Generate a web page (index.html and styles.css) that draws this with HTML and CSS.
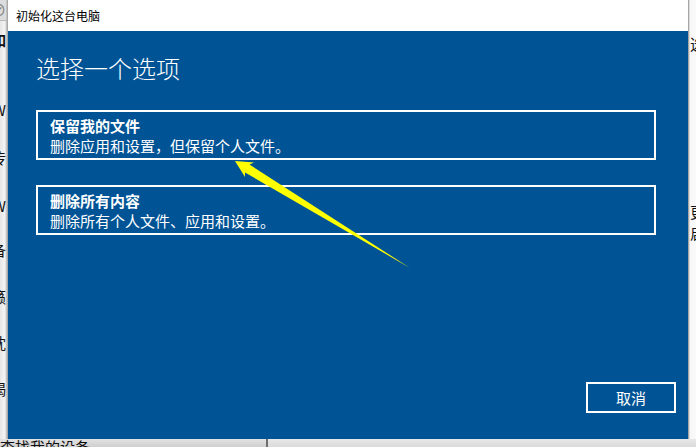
FILE: index.html
```html
<!DOCTYPE html>
<html lang="zh-CN">
<head>
    <meta charset="UTF-8">
    <meta name="viewport" content="width=device-width, initial-scale=1.0">
    <title>初始化这台电脑</title>
    <link rel="stylesheet" href="styles.css">
</head>
<body>
    <div class="screen">
        <div class="side side-left">
            <div class="side-text">
                <div class="top-bar"><span class="tb-icon">⊘</span></div>
                <div class="frag bold" style="margin-top: 10px">如</div>
                <div class="frag" style="margin-top: 52px">W</div>
                <div class="frag" style="margin-top: 30px">传</div>
                <div class="frag" style="margin-top: 30px">W</div>
                <div class="frag" style="margin-top: 26px">备</div>
                <div class="frag" style="margin-top: 29px">籁</div>
                <div class="frag" style="margin-top: 28px">枕</div>
                <div class="frag" style="margin-top: 28px">揭</div>
            </div>
        </div>

        <div class="dialog">
            <div class="title-bar">初始化这台电脑</div>
            <div class="dialog-body">
                <h1 class="heading">选择一个选项</h1>
                <div class="option">
                    <div class="option-title">保留我的文件</div>
                    <div class="option-desc">删除应用和设置，但保留个人文件。</div>
                </div>
                <div class="option">
                    <div class="option-title">删除所有内容</div>
                    <div class="option-desc">删除所有个人文件、应用和设置。</div>
                </div>
                <div class="footer">
                    <button class="btn-cancel">取消</button>
                </div>
            </div>
        </div>

        <div class="side side-right">
            <div class="side-text">
                <div class="frag" style="margin-top: 35px">选</div>
                <div class="frag" style="margin-top: 150px">更</div>
                <div class="frag" style="margin-top: 3px">启</div>
            </div>
        </div>

        <div class="bottom-strip">
            <div class="bottom-left">查找我的设备</div>
            <div class="bottom-right"></div>
        </div>

        <!-- annotation arrow drawn over the screenshot -->
        <svg class="arrow" width="696" height="447" viewBox="0 0 696 447">
            <polygon points="235,161 245,177 245,172.5 410,268 249.5,164.5 254,162.5" fill="#ffff00"/>
        </svg>
    </div>
</body>
</html>
```

FILE: styles.css
```css
body {
    margin: 0;
    font-family: "Noto Sans CJK SC", "Microsoft YaHei", sans-serif;
    background-color: #f3f3f3;
}

.screen {
    position: relative;
    width: 696px;
    height: 447px;
    overflow: hidden;
    display: grid;
    grid-template-columns: 8px 680px 8px;
    grid-template-rows: 439px 8px;
}

.side {
    overflow: hidden;
    background-color: #f5f5f5;
}

.side-left {
    background: linear-gradient(to right, #e6e6e6, #f4f4f4 60%, #9a9a9a);
}

.side-left .side-text {
    width: 22px;
    margin-left: -16px;
    text-align: right;
}

.side-right {
    background: linear-gradient(to right, #8a8a8a, #f7f7f7 25%, #fafafa);
}

.side-right .side-text {
    width: 22px;
    margin-left: 2px;
    text-align: left;
}

.top-bar {
    height: 20px;
    border-bottom: 1px solid #b8b8b8;
    background-color: #dcdcdc;
    font-size: 14px;
    line-height: 18px;
    color: #777;
}

.frag {
    font-size: 15px;
    line-height: 18px;
    color: #111;
}

.frag.bold {
    font-weight: 700;
}

.dialog {
    display: flex;
    flex-direction: column;
    background-color: #005496;
    box-shadow: 1px 1px 0 #7b7b7b, 2px 2px 2px rgba(0, 0, 0, 0.2);
}

.title-bar {
    height: 31px;
    padding-left: 8px;
    background-color: #fff;
    color: #000;
    font-size: 12px;
    line-height: 31px;
}

.dialog-body {
    flex: 1;
    display: flex;
    flex-direction: column;
    gap: 25px;
    padding: 21px 32px 0 28px;
    color: #fff;
}

.heading {
    margin: 0 0 1px;
    font-size: 24px;
    font-weight: 300;
    line-height: 32px;
}

.option {
    height: 40px;
    padding: 4px 12px 2px;
    border: 2px solid #fff;
    font-size: 15px;
    line-height: 20px;
}

.option-title {
    font-weight: 700;
}

.footer {
    flex: 1;
    display: flex;
    justify-content: flex-end;
    align-items: flex-end;
    margin-right: -20px;
    padding-bottom: 26px;
}

.btn-cancel {
    width: 90px;
    height: 31px;
    border: 2px solid #fff;
    background: transparent;
    color: #fff;
    font-family: "Noto Sans CJK SC", sans-serif;
    font-size: 15px;
    line-height: 25px;
    padding: 0;
}

.bottom-strip {
    grid-column: 1 / 4;
    display: flex;
}

.bottom-left {
    width: 266px;
    border-right: 2px solid #6e6e6e;
    background: linear-gradient(to bottom, #e2e2e2, #cfcfcf);
    font-size: 15px;
    line-height: 8px;
    padding-top: 4px;
    color: #111;
    overflow: hidden;
    white-space: nowrap;
}

.bottom-right {
    flex: 1;
    background: linear-gradient(to bottom, #e8e8e8, #dadada);
}

.arrow {
    position: absolute;
    top: 0;
    left: 0;
    pointer-events: none;
}
```
